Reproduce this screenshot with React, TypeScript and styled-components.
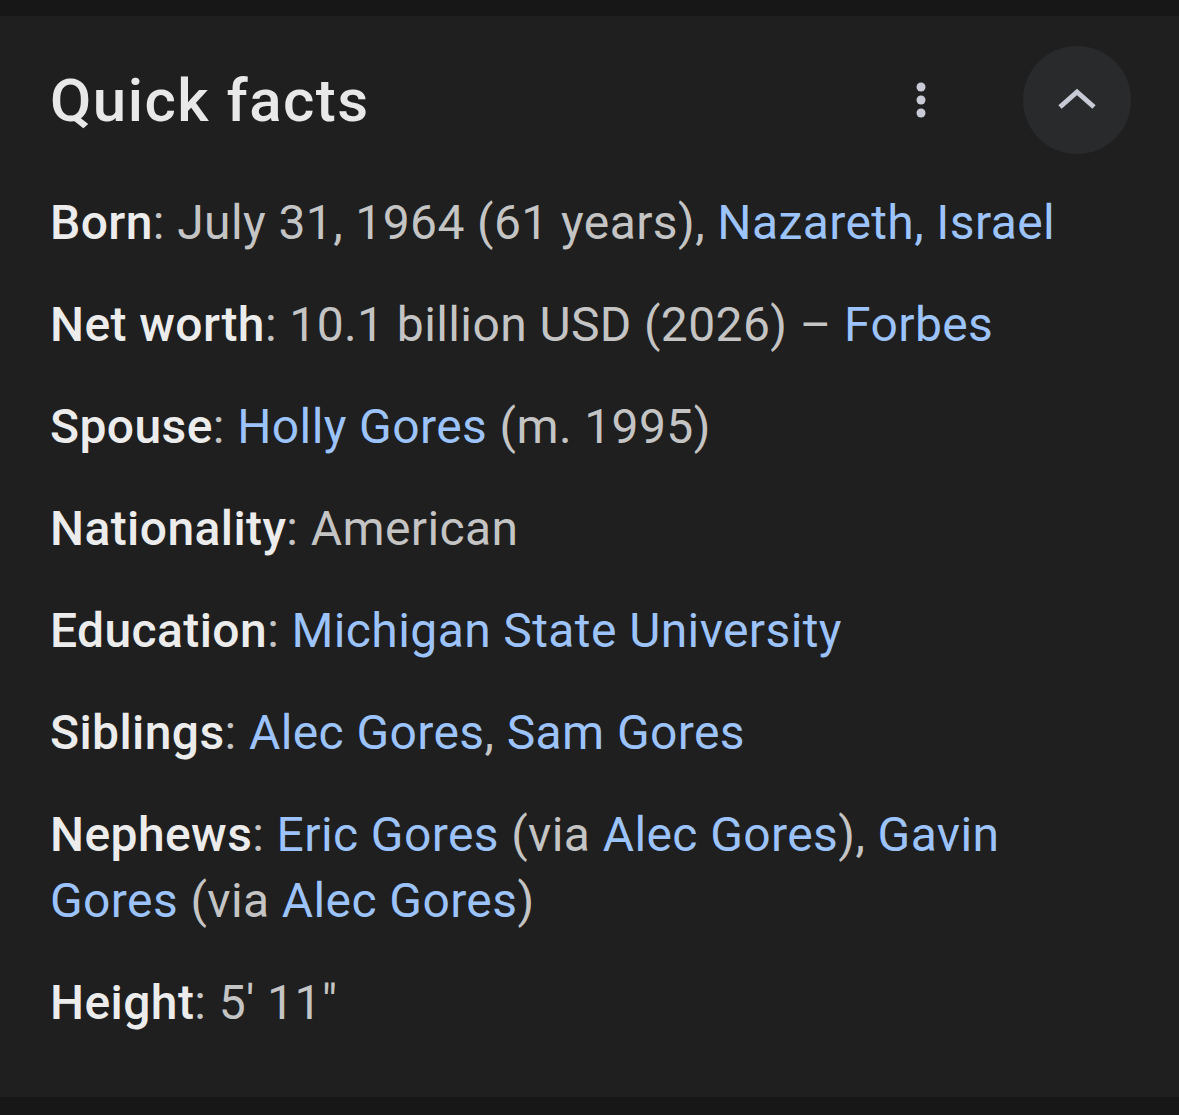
import styled, { createGlobalStyle } from "styled-components";

type Part = { text: string; kind?: "link" | "plain" };

const facts: { label: string; parts: Part[] }[] = [
  {
    label: "Born",
    parts: [
      { text: "July 31, 1964 (61 years), " },
      { text: "Nazareth, Israel", kind: "link" },
    ],
  },
  {
    label: "Net worth",
    parts: [
      { text: "10.1 billion USD (2026) – " },
      { text: "Forbes", kind: "link" },
    ],
  },
  {
    label: "Spouse",
    parts: [{ text: "Holly Gores", kind: "link" }, { text: " (m. 1995)" }],
  },
  { label: "Nationality", parts: [{ text: "American" }] },
  {
    label: "Education",
    parts: [{ text: "Michigan State University", kind: "link" }],
  },
  {
    label: "Siblings",
    parts: [
      { text: "Alec Gores", kind: "link" },
      { text: ", " },
      { text: "Sam Gores", kind: "link" },
    ],
  },
  {
    label: "Nephews",
    parts: [
      { text: "Eric Gores", kind: "link" },
      { text: " (via " },
      { text: "Alec Gores", kind: "link" },
      { text: "), " },
      { text: "Gavin Gores", kind: "link" },
      { text: " (via " },
      { text: "Alec Gores", kind: "link" },
      { text: ")" },
    ],
  },
  { label: "Height", parts: [{ text: "5′ 11″" }] },
];

const GlobalStyle = createGlobalStyle`
  html, body {
    margin: 0;
    padding: 0;
    background: #171717;
  }
  body {
    font-family: Roboto, "Liberation Sans", sans-serif;
  }
`;

const Page = styled.div`
  padding: 16px 0 19px;
  background: #171717;
`;

const Panel = styled.section`
  background: #1f1f1f;
  padding: 30px 48px 61px 50px;
`;

const Header = styled.div`
  display: flex;
  align-items: center;
  height: 108px;
`;

const Title = styled.h2`
  flex: 1;
  margin: 0;
  font-family: Roboto, "Liberation Sans", sans-serif;
  font-weight: 500;
  font-size: 60px;
  letter-spacing: 1.5px;
  color: #e8e8e8;
`;

const MoreButton = styled.button`
  width: 40px;
  height: 60px;
  margin-right: 82px;
  padding: 0;
  border: none;
  background: none;
  display: flex;
  align-items: center;
  justify-content: center;
`;

const CollapseButton = styled.button`
  width: 108px;
  height: 108px;
  border-radius: 50%;
  border: none;
  background: #282a2c;
  display: flex;
  align-items: center;
  justify-content: center;
  padding: 0;
`;

const List = styled.div`
  display: flex;
  flex-direction: column;
  gap: 36px;
  margin-top: 36px;
`;

const Row = styled.div`
  font-size: 48px;
  line-height: 66px;
  letter-spacing: 0.4px;
  color: #c4c4c4;
  padding-right: 70px;
`;

const Label = styled.span`
  color: #ececec;
  font-weight: 500;
`;

const Value = styled.span<{ $link?: boolean }>`
  color: ${({ $link }) => ($link ? "#9cc3fb" : "#c4c4c4")};
`;

export default function App() {
  return (
    <Page>
      <GlobalStyle />
      <Panel>
        <Header>
          <Title>Quick facts</Title>
          <MoreButton aria-label="More options">
            <svg width="12" height="40" viewBox="0 0 12 40">
              <circle cx="6" cy="7" r="4.5" fill="#c8cad6" />
              <circle cx="6" cy="20" r="4.5" fill="#c8cad6" />
              <circle cx="6" cy="33" r="4.5" fill="#c8cad6" />
            </svg>
          </MoreButton>
          <CollapseButton aria-label="Collapse">
            <svg width="40" height="26" viewBox="0 0 40 26">
              <path
                d="M3 20 L20 5 L37 20"
                fill="none"
                stroke="#c8cad6"
                strokeWidth="5"
              />
            </svg>
          </CollapseButton>
        </Header>
        <List>
          {facts.map((fact) => (
            <Row key={fact.label}>
              <Label>{fact.label}</Label>:{" "}
              {fact.parts.map((p, i) => (
                <Value key={i} $link={p.kind === "link"}>
                  {p.text}
                </Value>
              ))}
            </Row>
          ))}
        </List>
      </Panel>
    </Page>
  );
}
